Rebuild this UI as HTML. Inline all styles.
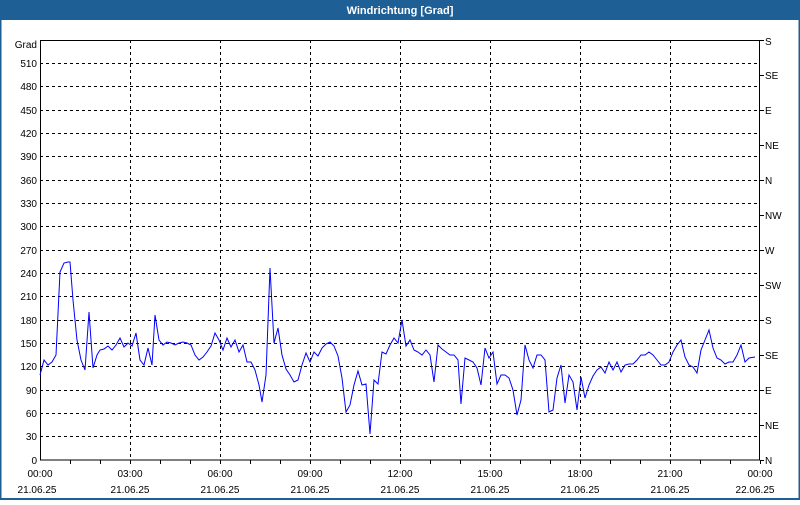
<!DOCTYPE html>
<html><head><meta charset="utf-8"><style>
body{margin:0;width:800px;height:500px;overflow:hidden;background:#fff;font-family:"Liberation Sans",sans-serif}
</style></head><body>
<svg width="800" height="500" xmlns="http://www.w3.org/2000/svg" font-family="Liberation Sans, sans-serif" font-size="10">
<rect x="0" y="0" width="800" height="500" fill="#fff"/>
<rect x="0.5" y="0.5" width="799" height="498.5" fill="none" stroke="#1e5f96" stroke-width="2"/>
<rect x="0" y="0" width="800" height="20" fill="#1e5f96"/>
<text x="400" y="14" fill="#fff" font-weight="bold" font-size="11" text-anchor="middle">Windrichtung [Grad]</text>
<g stroke="#000" stroke-width="1" stroke-dasharray="3,3" shape-rendering="crispEdges">
<path d="M40 63.5H760M40 86.5H760M40 110.5H760M40 133.5H760M40 156.5H760M40 180.5H760M40 203.5H760M40 226.5H760M40 250.5H760M40 273.5H760M40 296.5H760M40 320.5H760M40 343.5H760M40 366.5H760M40 390.5H760M40 413.5H760M40 436.5H760"/>
<path d="M130.5 40V460M220.5 40V460M310.5 40V460M400.5 40V460M490.5 40V460M580.5 40V460M670.5 40V460"/>
</g>
<g stroke="#000" stroke-width="1" shape-rendering="crispEdges">
<rect x="40.5" y="40.5" width="719" height="419.5" fill="none"/>
<path d="M70.5 460V464M100.5 460V464M130.5 460V464M160.5 460V464M190.5 460V464M220.5 460V464M250.5 460V464M280.5 460V464M310.5 460V464M340.5 460V464M370.5 460V464M400.5 460V464M430.5 460V464M460.5 460V464M490.5 460V464M520.5 460V464M550.5 460V464M580.5 460V464M610.5 460V464M640.5 460V464M670.5 460V464M700.5 460V464M730.5 460V464M760.5 460V464"/>
<path d="M760 40.5H764M760 75.5H764M760 110.5H764M760 145.5H764M760 180.5H764M760 215.5H764M760 250.5H764M760 285.5H764M760 320.5H764M760 355.5H764M760 390.5H764M760 425.5H764M760 460.5H764"/>
</g>
<polyline fill="none" stroke="#0000ff" stroke-width="1" points="40,375 44,360 48,365 52,362 56,355 60,272 64,263 68,262 70,262 73,300 77,340 81,360 85,370 89,312 93,368 97,355 100,350 104,349 108,346 112,350 116,345 120,338 124,347 128,343 132,346 136,333 140,360 144,365 148,348 152,365 155,315 159,340 163,345 167,342 171,343 175,345 179,343 183,342 187,343 191,345 195,355 199,360 203,357 207,352 211,346 215,333 219,340 223,350 227,338 231,347 235,340 239,352 243,345 247,362 251,362 255,370 259,385 262,402 266,375 270,268 274,343 278,328 282,355 286,369 290,375 294,382 298,380 302,365 306,353 310,362 314,352 318,356 322,348 326,344 330,342 334,346 338,356 342,378 346,412 350,405 354,385 358,371 362,385 366,384 370,434 374,380 378,384 382,352 386,354 390,345 394,338 398,343 402,320 406,346 410,340 414,350 418,352 422,355 426,350 430,355 434,382 438,345 442,349 446,352 450,355 454,355 458,360 461,404 465,358 469,360 473,362 477,368 481,385 485,348 489,358 493,352 497,384 501,375 505,375 509,378 513,390 517,415 521,400 525,345 529,360 533,368 537,355 541,355 545,360 549,412 553,410 557,378 561,365 565,403 569,375 573,382 577,410 581,377 585,398 589,385 593,376 597,370 601,367 605,373 609,362 613,370 617,362 621,372 625,365 629,364 633,364 637,360 641,355 645,355 649,352 653,355 657,360 661,365 665,365 669,362 673,352 677,345 681,340 685,357 689,365 693,367 697,373 701,350 705,340 709,330 713,348 717,358 721,360 725,364 729,362 733,362 737,355 741,345 745,362 749,358 755,357"/>
<g fill="#000" text-anchor="end">
<text x="37" y="48">Grad</text>
<text x="37" y="67">510</text><text x="37" y="90">480</text><text x="37" y="114">450</text><text x="37" y="137">420</text><text x="37" y="160">390</text><text x="37" y="184">360</text><text x="37" y="207">330</text><text x="37" y="230">300</text><text x="37" y="254">270</text><text x="37" y="277">240</text><text x="37" y="300">210</text><text x="37" y="324">180</text><text x="37" y="347">150</text><text x="37" y="370">120</text><text x="37" y="394">90</text><text x="37" y="417">60</text><text x="37" y="440">30</text><text x="37" y="464">0</text>
</g>
<g fill="#000">
<text x="765" y="45">S</text><text x="765" y="79">SE</text><text x="765" y="114">E</text><text x="765" y="149">NE</text><text x="765" y="184">N</text><text x="765" y="219">NW</text><text x="765" y="254">W</text><text x="765" y="289">SW</text><text x="765" y="324">S</text><text x="765" y="359">SE</text><text x="765" y="394">E</text><text x="765" y="429">NE</text><text x="765" y="464">N</text>
</g>
<g fill="#000" text-anchor="middle">
<text x="40" y="477">00:00</text><text x="130" y="477">03:00</text><text x="220" y="477">06:00</text><text x="310" y="477">09:00</text><text x="400" y="477">12:00</text><text x="490" y="477">15:00</text><text x="580" y="477">18:00</text><text x="670" y="477">21:00</text><text x="760" y="477">00:00</text>
<text x="37" y="493">21.06.25</text><text x="130" y="493">21.06.25</text><text x="220" y="493">21.06.25</text><text x="310" y="493">21.06.25</text><text x="400" y="493">21.06.25</text><text x="490" y="493">21.06.25</text><text x="580" y="493">21.06.25</text><text x="670" y="493">21.06.25</text><text x="755" y="493">22.06.25</text>
</g>
</svg>
</body></html>
